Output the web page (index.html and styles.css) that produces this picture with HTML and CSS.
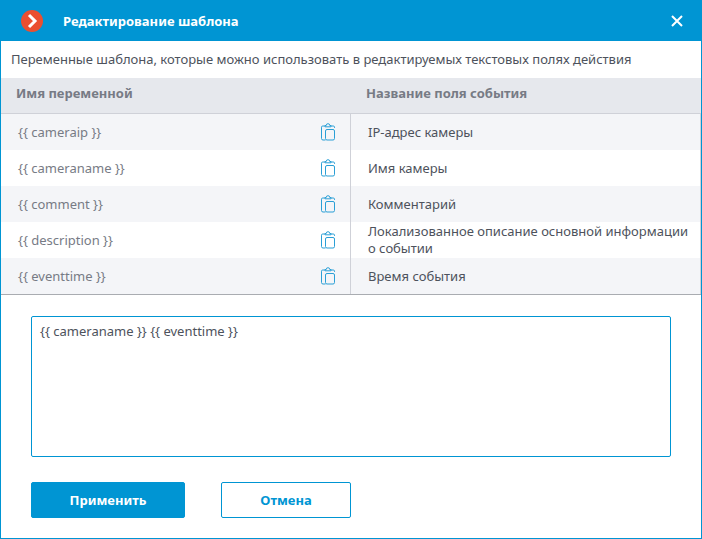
FILE: index.html
```html
<!DOCTYPE html>
<html lang="ru">
<head>
<meta charset="utf-8">
<title>Редактирование шаблона</title>
<link rel="stylesheet" href="styles.css">
</head>
<body>
<svg class="defs" width="0" height="0">
  <symbol id="copy" viewBox="0 0 16 18">
    <path d="M1.5 15.5V4.2a1.2 1.2 0 0 1 1.2-1.2H5M11 3h2.300a1.200 1.200 0 0 1 1.200 1.200V5M5 3.800V2.500h1.200a1.800 1.800 0 0 1 3.600 0H11v1.300z" fill="none" stroke="currentColor"/>
    <rect x="5.500" y="6.500" width="9" height="10.500" rx="1.500" fill="none" stroke="currentColor"/>
    <path d="M1.500 15.500a1.500 1.500 0 0 0 1.500 1.500h2.500" fill="none" stroke="currentColor"/>
  </symbol>
</svg>
<main class="dialog">
  <header class="titlebar">
    <svg class="logo" viewBox="0 0 22 22" width="22" height="22"><circle cx="11" cy="11" r="11" fill="#ea4f30"/><path d="M8 5l6 6-6 6" fill="none" stroke="#fff" stroke-width="3"/></svg>
    <h1 class="title">Редактирование шаблона</h1>
    <svg class="close" viewBox="0 0 12 12" width="12" height="12"><path d="M1 1l10 10M11 1L1 11" stroke="#fff" stroke-width="2"/></svg>
  </header>
  <p class="hint">Переменные шаблона, которые можно использовать в редактируемых текстовых полях действия</p>
  <section class="table">
    <div class="thead">
      <div class="th th-left">Имя переменной</div>
      <div class="th th-right">Название поля события</div>
    </div>
    <div class="row odd">
      <div class="var"><span>{{ cameraip }}</span><svg class="icon"><use href="#copy"/></svg></div>
      <div class="name">IP-адрес камеры</div>
    </div>
    <div class="row">
      <div class="var"><span>{{ cameraname }}</span><svg class="icon"><use href="#copy"/></svg></div>
      <div class="name">Имя камеры</div>
    </div>
    <div class="row odd">
      <div class="var"><span>{{ comment }}</span><svg class="icon"><use href="#copy"/></svg></div>
      <div class="name">Комментарий</div>
    </div>
    <div class="row">
      <div class="var"><span>{{ description }}</span><svg class="icon"><use href="#copy"/></svg></div>
      <div class="name">Локализованное описание основной информации о событии</div>
    </div>
    <div class="row odd">
      <div class="var"><span>{{ eventtime }}</span><svg class="icon"><use href="#copy"/></svg></div>
      <div class="name">Время события</div>
    </div>
  </section>
  <div class="editor">{{ cameraname }} {{ eventtime }}</div>
  <footer class="actions">
    <button class="btn primary">Применить</button>
    <button class="btn secondary">Отмена</button>
  </footer>
</main>
</body>
</html>
```
FILE: styles.css
```css
* { box-sizing: border-box; }
html, body { margin: 0; height: 100%; background: #fff; }
.defs { position: absolute; }
.dialog {
  width: 702px; height: 539px;
  display: flex; flex-direction: column;
  border: 1px solid #0095d3; border-top: 0;
  font-family: "Noto Sans", "Open Sans", sans-serif;
  font-size: 13px; color: #4d525c;
}
.titlebar {
  height: 41px; margin: 0 -1px; padding: 0 19px 0 21px;
  background: #0095d3; color: #fff;
  display: flex; align-items: center; flex: none;
}
.logo { flex: none; }
.title { margin: 0 0 0 20px; flex: 1; font-size: 13px; font-weight: 700; }
.hint { margin: 0; height: 37px; line-height: 36px; padding-left: 10px; flex: none; font-size: 13px; white-space: nowrap; }
.table { border-bottom: 1px solid #a9acb1; flex: none; }
.thead { display: flex; height: 36px; background: #e6e8ed; border-bottom: 1px solid #cfd1d8; }
.th { font-weight: 700; color: #777b85; line-height: 29px; padding-top: 1px; }
.th-left { width: 349px; padding-left: 15px; }
.th-right { padding-left: 16px; }
.row { display: flex; height: 36px; }
.row.odd { background: #f4f5f8; }
.var { width: 350px; flex: none; display: flex; align-items: center; justify-content: space-between; padding: 0 14px 0 17px; border-right: 1px solid #cfd1d8; color: #777b85; }
.icon { width: 16px; height: 18px; color: #2a9fd6; }
.name { flex: 1; display: flex; align-items: center; padding: 0 4px 0 17px; line-height: 17px; border-right: 1px solid #cfd1d8; }
.editor { margin: 21px 0 0 30px; width: 640px; height: 141px; flex: none; border: 1px solid #0095d3; border-radius: 2px; padding: 5px 8px; line-height: 18px; }
.actions { display: flex; gap: 36px; margin: 25px 0 0 30px; }
.btn { height: 36px; border-radius: 2px; font: 700 13px "Noto Sans", "Open Sans", sans-serif; border: 1px solid #0095d3; padding: 0; }
.primary { width: 154px; background: #0095d3; color: #fff; }
.secondary { width: 130px; background: #fff; color: #0095d3; }
```
